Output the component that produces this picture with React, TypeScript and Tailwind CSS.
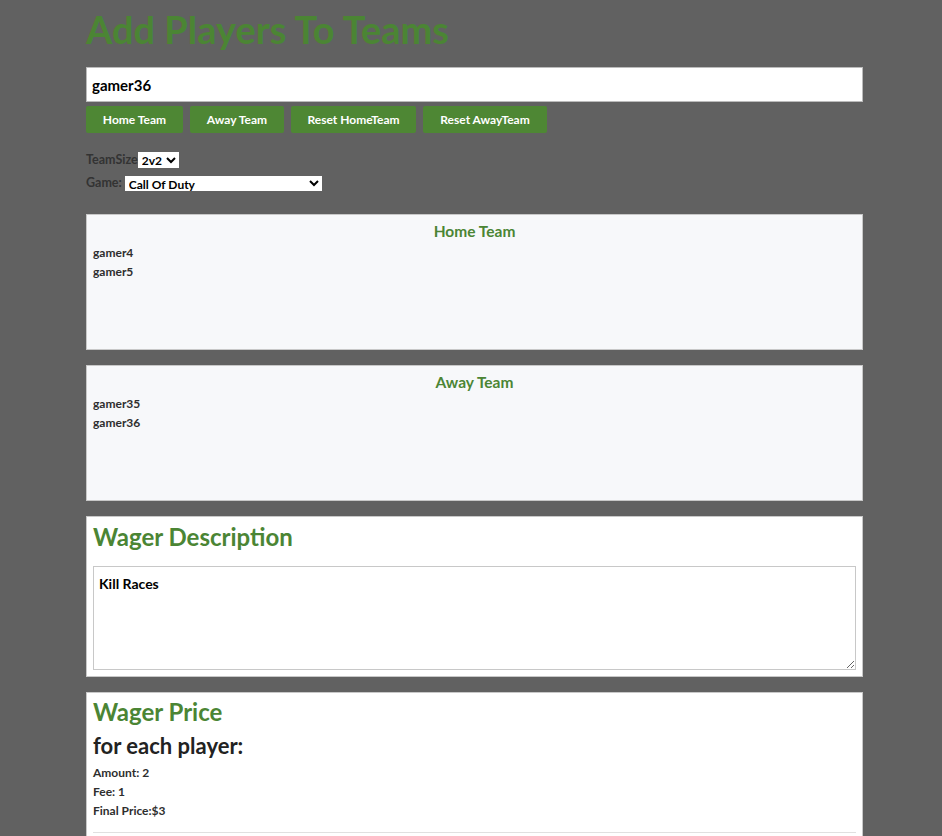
import React, { useState } from 'react';

const green = 'text-[#4b8534]';

const App: React.FC = () => {
  const [player, setPlayer] = useState('gamer36');
  const [teamSize, setTeamSize] = useState('2v2');
  const [game, setGame] = useState('Call Of Duty');
  const [description, setDescription] = useState('Kill Races');

  const homeTeam = ['gamer4', 'gamer5'];
  const awayTeam = ['gamer35', 'gamer36'];

  return (
    <div className="min-h-screen bg-[#616161] font-['Lato',sans-serif] text-[#333]">
      <div className="ml-[86px] w-[777px] pt-[6px]">
        {/* Title */}
        <h1 className={`text-[38px] font-bold leading-[46px] ${green}`}>Add Players To Teams</h1>

        {/* Player input */}
        <input
          type="text"
          value={player}
          onChange={e => setPlayer(e.target.value)}
          className="mt-[15px] block h-[35px] w-full border border-[#bbb] bg-white px-[5px] text-[15px] font-bold text-black outline-none"
        />

        {/* Buttons */}
        <div className="mt-[4px] flex gap-[7px]">
          <button className="h-[27px] w-[97px] rounded-[2px] bg-[#4e8734] text-[12px] font-bold text-white">Home Team</button>
          <button className="h-[27px] w-[94px] rounded-[2px] bg-[#4e8734] text-[12px] font-bold text-white">Away Team</button>
          <button className="h-[27px] w-[125px] rounded-[2px] bg-[#4e8734] text-[12px] font-bold text-white">Reset HomeTeam</button>
          <button className="h-[27px] w-[124px] rounded-[2px] bg-[#4e8734] text-[12px] font-bold text-white">Reset AwayTeam</button>
        </div>

        {/* Selects */}
        <div className="mt-[18px] flex items-center text-[12.5px] font-bold text-[#333]">
          <span>TeamSize</span>
          <select
            value={teamSize}
            onChange={e => setTeamSize(e.target.value)}
            className="h-[16px] w-[41px] bg-white text-[12px] text-black"
          >
            <option>1v1</option>
            <option>2v2</option>
            <option>3v3</option>
            <option>4v4</option>
          </select>
        </div>
        <div className="mt-[4px] flex items-center text-[12.5px] font-bold text-[#333]">
          <span>Game:&nbsp;</span>
          <select
            value={game}
            onChange={e => setGame(e.target.value)}
            className="h-[15px] w-[197px] bg-white text-[12px] text-black"
          >
            <option>Call Of Duty</option>
            <option>Fortnite</option>
            <option>Madden</option>
          </select>
        </div>

        {/* Home team */}
        <div className="mt-[21px] h-[136px] border border-[#c8c8c8] bg-[#f7f8fa] px-[6px] pt-[6px]">
          <h3 className={`text-center text-[15.5px] font-bold leading-[20px] ${green}`}>Home Team</h3>
          <div className="mt-[2px]">
            {homeTeam.map(p => (
              <p key={p} className="text-[12px] font-bold leading-[19px] text-[#2e2e2e]">{p}</p>
            ))}
          </div>
        </div>

        {/* Away team */}
        <div className="mt-[15px] h-[136px] border border-[#c8c8c8] bg-[#f7f8fa] px-[6px] pt-[6px]">
          <h3 className={`text-center text-[15.5px] font-bold leading-[20px] ${green}`}>Away Team</h3>
          <div className="mt-[2px]">
            {awayTeam.map(p => (
              <p key={p} className="text-[12px] font-bold leading-[19px] text-[#2e2e2e]">{p}</p>
            ))}
          </div>
        </div>

        {/* Wager description */}
        <div className="mt-[15px] border border-[#c8c8c8] bg-white px-[6px] pb-[6px] pt-[5px]">
          <h2 className={`text-[24px] font-bold leading-[30px] ${green}`}>Wager Description</h2>
          <textarea
            value={description}
            onChange={e => setDescription(e.target.value)}
            className="mt-[14px] block h-[104px] w-full border border-[#c8c8c8] px-[5px] pt-[6px] text-[14px] font-bold text-black outline-none"
          />
        </div>

        {/* Wager price */}
        <div className="mt-[15px] border border-[#c8c8c8] bg-white px-[6px] pt-[4px]">
          <h2 className={`text-[24px] font-bold leading-[30px] ${green}`}>Wager Price</h2>
          <h3 className="mt-[6px] text-[22px] font-bold leading-[26px] text-[#222]">for each player:</h3>
          <div className="mt-[4px]">
            <p className="text-[12px] font-bold leading-[19px] text-[#2e2e2e]">Amount: 2</p>
            <p className="text-[12px] font-bold leading-[19px] text-[#2e2e2e]">Fee: 1</p>
            <p className="text-[12px] font-bold leading-[19px] text-[#2e2e2e]">Final Price:$3</p>
          </div>
          <hr className="mt-[12px] border-[#e0e0e0]" />
          <div className="h-[40px]" />
        </div>
      </div>
    </div>
  );
};

export default App;
